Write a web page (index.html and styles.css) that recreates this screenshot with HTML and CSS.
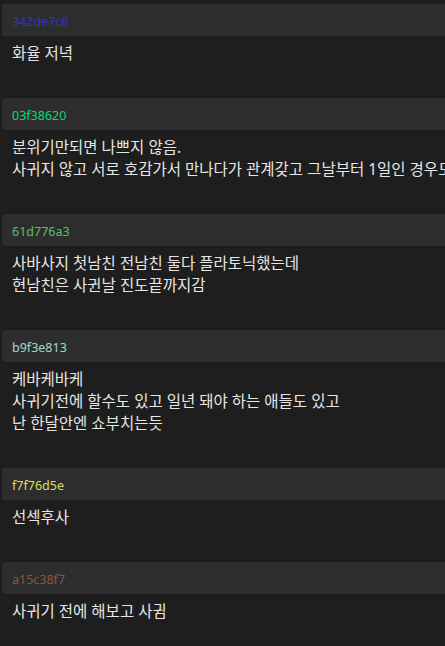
FILE: index.html
```html
<!DOCTYPE html>
<html lang="ko">
<head>
    <meta charset="UTF-8">
    <meta name="viewport" content="width=device-width, initial-scale=1.0">
    <title>Comments</title>
    <link rel="stylesheet" href="styles.css">
</head>
<body>
    <div class="comments">
        <div class="comment">
            <div class="comment-head"><span class="hash" style="color: #342de7;">342de7c8</span></div>
            <div class="comment-body">
                <p>화율 저녁</p>
            </div>
        </div>
        <div class="comment">
            <div class="comment-head"><span class="hash" style="color: #03f386;">03f38620</span></div>
            <div class="comment-body">
                <p>분위기만되면 나쁘지 않음.</p>
                <p>사귀지 않고 서로 호감가서 만나다가 관계갖고 그날부터 1일인 경우도 많음</p>
            </div>
        </div>
        <div class="comment">
            <div class="comment-head"><span class="hash" style="color: #61d776;">61d776a3</span></div>
            <div class="comment-body">
                <p>사바사지 첫남친 전남친 둘다 플라토닉했는데</p>
                <p>현남친은 사귄날 진도끝까지감</p>
            </div>
        </div>
        <div class="comment">
            <div class="comment-head"><span class="hash" style="color: #b9f3e8;">b9f3e813</span></div>
            <div class="comment-body">
                <p>케바케바케</p>
                <p>사귀기전에 할수도 있고 일년 돼야 하는 애들도 있고</p>
                <p>난 한달안엔 쇼부치는듯</p>
            </div>
        </div>
        <div class="comment">
            <div class="comment-head"><span class="hash" style="color: #f7f76d;">f7f76d5e</span></div>
            <div class="comment-body">
                <p>선섹후사</p>
            </div>
        </div>
        <div class="comment">
            <div class="comment-head"><span class="hash" style="color: #a15c38;">a15c38f7</span></div>
            <div class="comment-body">
                <p>사귀기 전에 해보고 사귐</p>
            </div>
        </div>
    </div>
</body>
</html>
```

FILE: styles.css
```css
html {
    overflow: hidden;
}
body {
    font-family: "Noto Sans", "Noto Sans CJK KR", sans-serif;
    margin: 0;
    padding: 4px 0 0 2px;
    background-color: #1e1e1e;
    color: #e6e6e6;
}
.comments {
    width: 620px;
}
.comment-head {
    background-color: #2d2d2d;
    border-radius: 4px;
    height: 32px;
    line-height: 32px;
    padding: 0 10px;
}
.hash {
    font-size: 12.5px;
    opacity: 0.85;
}
.comment-body {
    padding: 6px 10px 34px;
}
.comment-body p {
    margin: 0;
    font-size: 15.5px;
    line-height: 22px;
    white-space: nowrap;
}
```
